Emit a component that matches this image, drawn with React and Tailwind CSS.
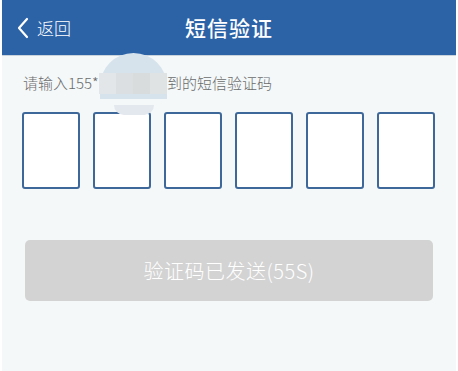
import React from "react";

const App = () => {
  const cells = [0, 1, 2, 3, 4, 5];

  return (
    <div
      className="w-[458px] h-[371px] bg-white px-[2px] overflow-hidden"
      style={{ fontFamily: '"Noto Sans CJK SC", "Noto Sans", sans-serif' }}
    >
      <div className="relative h-full bg-[#f4f8f9]">
        {/* Header */}
        <header className="relative flex items-center justify-center h-[56px] bg-[#2c63a7] border-b border-[#c9d3dc]">
          <div className="absolute left-[14px] top-0 h-full flex items-center text-white">
            <svg width="14" height="22" viewBox="0 0 14 22" fill="none">
              <path d="M11 2 L3 11 L11 20" stroke="white" strokeWidth="2.2" strokeLinecap="round" strokeLinejoin="round" />
            </svg>
            <span className="ml-[7px] text-[17px] leading-none font-light">返回</span>
          </div>
          <h1 className="text-white text-[21px] font-medium tracking-[1px]">短信验证</h1>
        </header>

        {/* Hint */}
        <p className="pl-[21px] pt-[17px] text-[15px] leading-[20px] text-[#6b6b6b] font-light">
          请输入155*********收到的短信验证码
        </p>

        {/* blurred phone number */}
        <div className="absolute left-[98px] top-[53px] w-[67px] h-[46px] rounded-t-full bg-[#d6e2ec]" />
        <div className="absolute left-[97px] top-[73px] w-[68px] h-[21px] flex">
          <div className="flex-1 bg-[#e3e6e8]" />
          <div className="flex-1 bg-[#dcdfe1]" />
          <div className="flex-1 bg-[#d9dcdd]" />
          <div className="flex-1 bg-[#e0e3e4]" />
        </div>
        <div className="absolute left-[112px] top-[105px] w-[40px] h-[10px] rounded-b-full bg-[#e2e8ee]" />

        {/* Code cells */}
        <div className="flex gap-[13px] pl-[20px] mt-[19px]">
          {cells.map((c) => (
            <div
              key={c}
              className="w-[58px] h-[77px] bg-white border-2 border-[#3d6899] rounded-[3px]"
            />
          ))}
        </div>

        {/* Button */}
        <div className="px-[23px] mt-[51px]">
          <button className="w-full h-[61px] bg-[#d3d3d3] rounded-[5px] text-white text-[20px] font-light tracking-[0.5px]">
            验证码已发送(55S)
          </button>
        </div>
      </div>
    </div>
  );
};

export default App;
